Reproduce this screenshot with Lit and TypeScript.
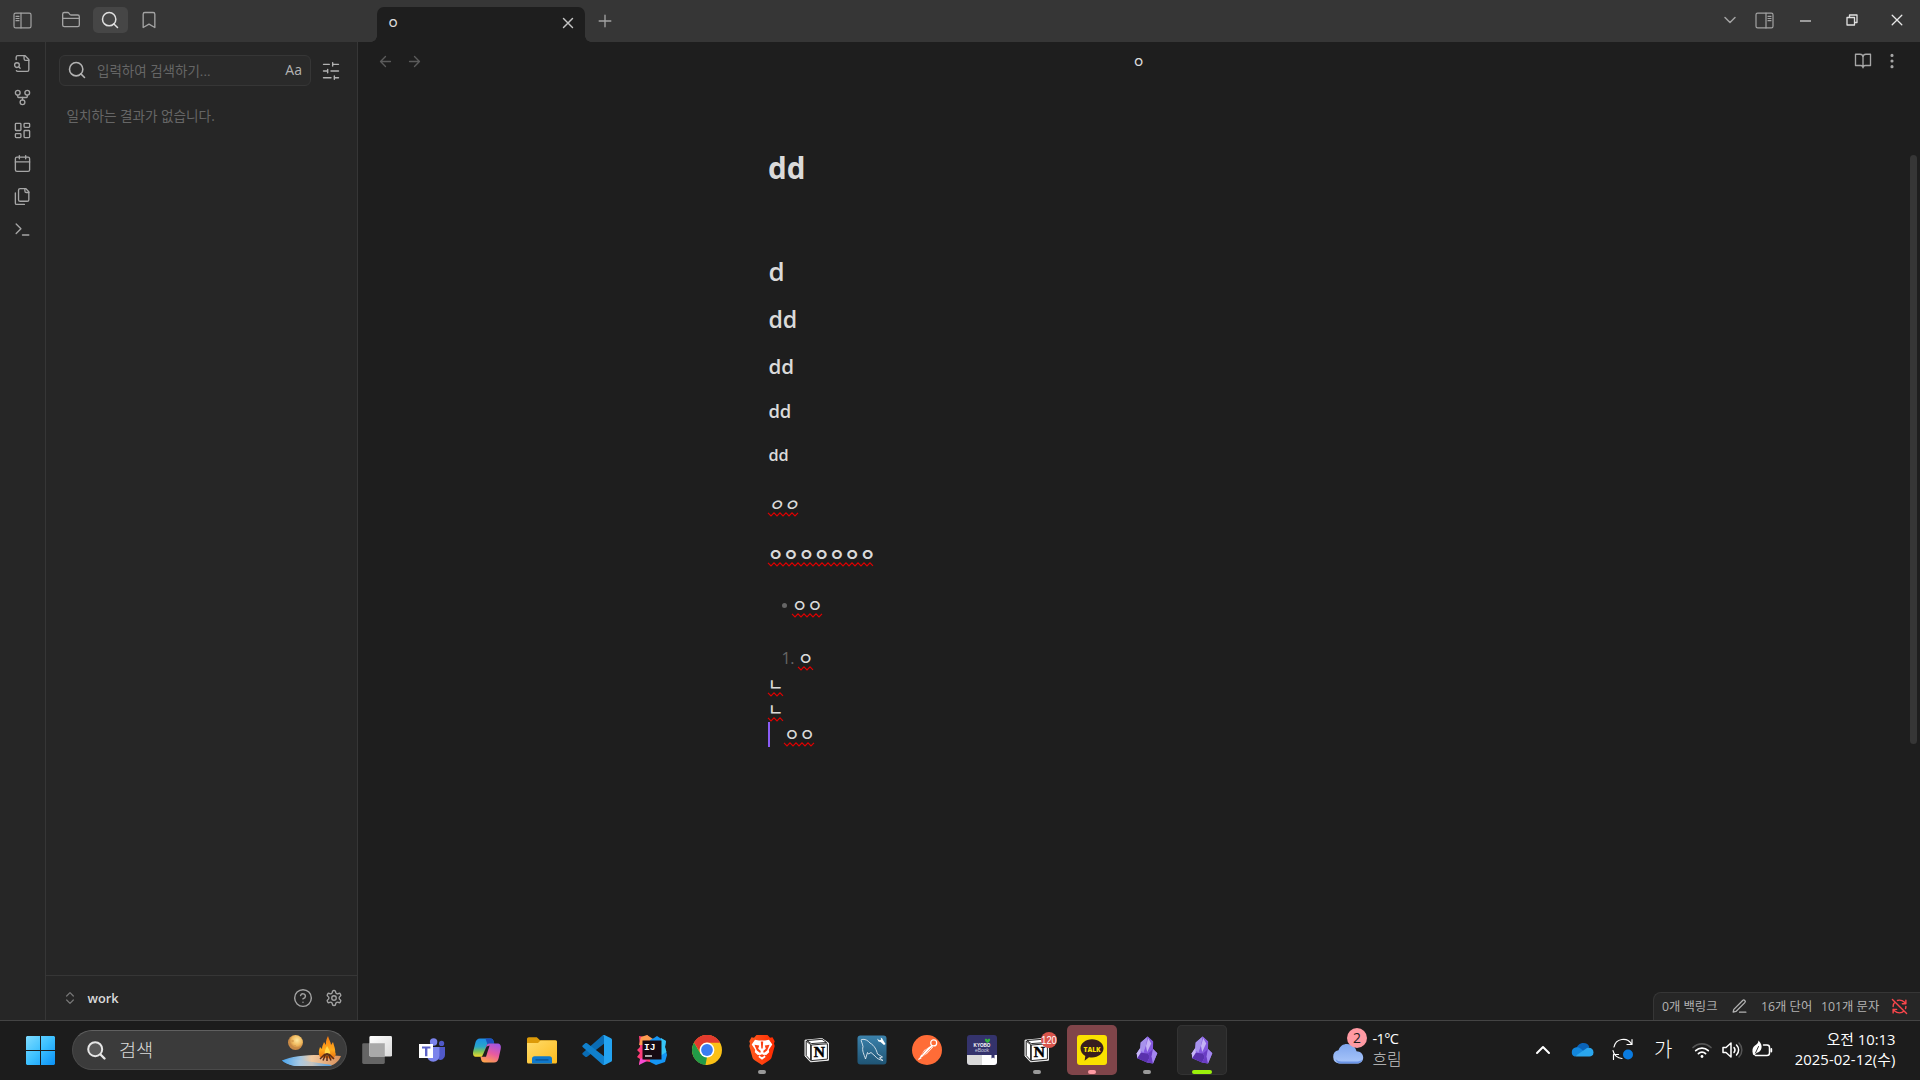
import { LitElement, html, svg, css, TemplateResult, SVGTemplateResult } from "lit";
import { customElement } from "lit/decorators.js";

/* ---------- line icons (24x24 grid) ---------- */
const paths: Record<string, SVGTemplateResult> = {
  folder: svg`<path d="M20 20a2 2 0 0 0 2-2V8a2 2 0 0 0-2-2h-7.9a2 2 0 0 1-1.69-.9L9.6 3.9A2 2 0 0 0 7.93 3H4a2 2 0 0 0-2 2v13a2 2 0 0 0 2 2Z"/><path d="M2 10h20"/>`,
  search: svg`<circle cx="11" cy="11" r="8"/><path d="m21 21-4.3-4.3"/>`,
  bookmark: svg`<path d="m19 21-7-4-7 4V5a2 2 0 0 1 2-2h10a2 2 0 0 1 2 2v16z"/>`,
  fileSearch: svg`<path d="M14 2v4a2 2 0 0 0 2 2h4"/><path d="M4.268 21a2 2 0 0 0 1.727 1H18a2 2 0 0 0 2-2V7l-5-5H6a2 2 0 0 0-2 2v3"/><path d="m9 18-1.5-1.5"/><circle cx="5" cy="14" r="3"/>`,
  fork: svg`<circle cx="12" cy="18" r="3"/><circle cx="6" cy="6" r="3"/><circle cx="18" cy="6" r="3"/><path d="M18 9v2c0 .6-.4 1-1 1H7c-.6 0-1-.4-1-1V9"/><path d="M12 12v3"/>`,
  dashboard: svg`<rect width="7" height="9" x="3" y="3" rx="1"/><rect width="7" height="5" x="14" y="3" rx="1"/><rect width="7" height="9" x="14" y="12" rx="1"/><rect width="7" height="5" x="3" y="16" rx="1"/>`,
  calendar: svg`<path d="M8 2v4M16 2v4"/><rect width="18" height="18" x="3" y="4" rx="2"/><path d="M3 10h18"/>`,
  files: svg`<path d="M20 7h-3a2 2 0 0 1-2-2V2"/><path d="M9 18a2 2 0 0 1-2-2V4a2 2 0 0 1 2-2h7l4 4v10a2 2 0 0 1-2 2Z"/><path d="M3 7.6v12.8A1.6 1.6 0 0 0 4.6 22h9.8"/>`,
  terminal: svg`<path d="m4 17 6-6-6-6M12 19h8"/>`,
  sliders: svg`<path d="M21 4h-7M10 4H3M21 12h-9M8 12H3M21 20h-5M12 20H3M14 2v4M8 10v4M16 18v4"/>`,
  updown: svg`<path d="m7 15 5 5 5-5M7 9l5-5 5 5"/>`,
  help: svg`<circle cx="12" cy="12" r="10"/><path d="M9.09 9a3 3 0 0 1 5.83 1c0 2-3 3-3 3M12 17h.01"/>`,
  gear: svg`<path d="M12.22 2h-.44a2 2 0 0 0-2 2v.18a2 2 0 0 1-1 1.73l-.43.25a2 2 0 0 1-2 0l-.15-.08a2 2 0 0 0-2.73.73l-.22.38a2 2 0 0 0 .73 2.73l.15.1a2 2 0 0 1 1 1.72v.51a2 2 0 0 1-1 1.74l-.15.09a2 2 0 0 0-.73 2.73l.22.38a2 2 0 0 0 2.73.73l.15-.08a2 2 0 0 1 2 0l.43.25a2 2 0 0 1 1 1.73V20a2 2 0 0 0 2 2h.44a2 2 0 0 0 2-2v-.18a2 2 0 0 1 1-1.73l.43-.25a2 2 0 0 1 2 0l.15.08a2 2 0 0 0 2.73-.73l.22-.39a2 2 0 0 0-.73-2.73l-.15-.08a2 2 0 0 1-1-1.74v-.5a2 2 0 0 1 1-1.74l.15-.09a2 2 0 0 0 .73-2.73l-.22-.38a2 2 0 0 0-2.73-.73l-.15.08a2 2 0 0 1-2 0l-.43-.25a2 2 0 0 1-1-1.73V4a2 2 0 0 0-2-2z"/><circle cx="12" cy="12" r="3"/>`,
  close: svg`<path d="M18 6 6 18M6 6l12 12"/>`,
  plus: svg`<path d="M5 12h14M12 5v14"/>`,
  left: svg`<path d="m12 19-7-7 7-7M19 12H5"/>`,
  right: svg`<path d="M5 12h14M12 5l7 7-7 7"/>`,
  down: svg`<path d="m6 9 6 6 6-6"/>`,
  book: svg`<path d="M2 3h6a4 4 0 0 1 4 4v14a3 3 0 0 0-3-3H2zM22 3h-6a4 4 0 0 0-4 4v14a3 3 0 0 1 3-3h7z"/>`,
  kebab: svg`<circle cx="12" cy="12" r="1"/><circle cx="12" cy="4.5" r="1"/><circle cx="12" cy="19.5" r="1"/>`,
  pencil: svg`<path d="M12 20h9M16.5 3.5a2.12 2.12 0 0 1 3 3L7 19l-4 1 1-4Z"/>`,
  syncOff: svg`<path d="M21 8 18.74 5.74A9.75 9.75 0 0 0 12 3C11 3 10.03 3.16 9.13 3.47M8 16H3v5M3 12C3 9.51 4 7.26 5.64 5.64M3 16l2.26 2.26A9.75 9.75 0 0 0 12 21c2.49 0 4.74-1 6.36-2.64M21 12c0 1-.16 1.97-.47 2.87M21 3v5h-5M22 22 2 2"/>`,
};

const icon = (name: string, size = 18, weight = 1.9) => html`<svg class="line" width=${size} height=${size}
  viewBox="0 0 24 24" stroke-width=${weight}>${paths[name]}</svg>`;

const panelIcon = (flip: boolean) => html`<svg class="line ${flip ? "flip" : ""}" width="19" height="17" viewBox="0 0 19 17" stroke-width="1.2">
  <rect x="1" y="1.1" width="17" height="14.8" rx="1.6"/><path d="M8 1v15M3 4.3h3M3 6.5h3M3 8.7h3"/></svg>`;

/* ---------- taskbar artwork (32x32 grid) ---------- */
const notion = svg`<path d="M4 6.2 21 4.6 27.5 9v17.2l-18 1.6L4 22z" fill="#fff" stroke="#eee" stroke-width="1" stroke-linejoin="round"/>
  <path d="M5.2 7 9.6 10.6v15.8L5.2 21.6zM6 6.6l15-1.3 4.6 3.2-15.4 1.1z" fill="#fff" stroke="#111" stroke-width=".9"/>
  <path d="M10.3 11 26.4 9.8v15.3l-16.1 1.5z" fill="#fff" stroke="#111" stroke-width=".9"/>
  <text x="18.4" y="23.2" text-anchor="middle" font-family="Liberation Serif, serif" font-weight="700" font-size="15.5" fill="#000" stroke="#000" stroke-width=".5">N</text>`;

const obsidian = svg`<path d="M16.7 2.6 22.1 7.4 22 15 26.3 19.3 22 29.4 16 28.6 6.3 24.2 5.7 19.3 9.2 14 9.7 8.4z" fill="#8f6be8"/>
  <path d="M16.7 2.6 9.7 8.4 9 16.6 13 18.5 15.5 11z" fill="#a792ec"/>
  <path d="M16.7 2.6 15 11.5 12.5 18.5 17 19.5 22 15 22.1 7.4z" fill="#8458df"/>
  <path d="m17.2 4 3 5.5-4 8.500-1.200-6z" fill="#c4b2f5"/>
  <path d="M9.2 14 5.7 19.3l.6 4.9 3.7-4.9z" fill="#c6b6f6"/>
  <path d="m9.8 18.7 7.2.8 1.8 3.6-2.8 5.5-9.7-4.4z" fill="#5a31ad"/>
  <path d="m17 19.5 5-4.5-.6 6.5.6 7.9-6-.8 2.8-5.500z" fill="#6a3cc4"/>
  <path d="m22 15 4.300 4.300-4.300 10.100-1.500-7z" fill="#a486f0"/>`;

const art: Record<string, SVGTemplateResult> = {
  taskview: svg`<defs><linearGradient id="tv" x1="0" y1="0" x2="1" y2="1"><stop offset="0" stop-color="#fff"/><stop offset="1" stop-color="#d9d9d9"/></linearGradient></defs>
    <rect x="1.2" y="9.3" width="22.6" height="20.6" rx="1.4" fill="#656565"/><rect x="8.4" y="2" width="22.6" height="20.6" rx="1.4" fill="url(#tv)"/>
    <path d="M8.4 9.3h15.4v13.3H9.8a1.4 1.4 0 0 1-1.4-1.4z" fill="#a9a9a9"/>`,
  teams: svg`<circle cx="17.6" cy="8" r="3.7" fill="#7b83eb"/><circle cx="25.6" cy="9.4" r="2.6" fill="#5059c9"/>
    <path d="M20 13h9v8a4.6 4.6 0 0 1-7 4.2z" fill="#5059c9"/><path d="M11 13h12.4v8.6a6.2 6.2 0 0 1-12.4 0z" fill="#7b83eb"/>
    <rect x="3" y="10" width="14" height="14" fill="#fff"/><path d="M6 12.4h8.4v2.2h-3v7.6H9v-7.6H6z" fill="#5b62c8"/>`,
  copilot: svg`<defs><linearGradient id="ca" x1="0" y1="0" x2="0" y2="1"><stop offset="0" stop-color="#1b8de8"/><stop offset=".45" stop-color="#2aa6c8"/><stop offset=".7" stop-color="#7ac25a"/><stop offset="1" stop-color="#f5d92c"/></linearGradient>
    <linearGradient id="cb" x1=".7" y1="0" x2=".3" y2="1"><stop offset="0" stop-color="#a355e0"/><stop offset=".5" stop-color="#e85aa0"/><stop offset="1" stop-color="#ffa34d"/></linearGradient></defs>
    <path d="M9 4.5h10.5c2 0 2.6 1 3.2 3l.6 2h-4.4c-2 0-3 1-3.6 3l-2 7.5c-.6 2-1.6 2.8-3.6 2.8H5.5C2.3 22.8 1.5 20.5 2.3 17l2-8C5 6 6.5 4.5 9 4.5z" fill="url(#ca)"/>
    <path d="M14.5 4.5h5c2 0 2.6 1 3.2 3l.6 2h-4.4c-1 0-1.8.4-2.4 1z" fill="#1d4fbf"/>
    <path d="M23 28.5H13.5c-2 0-2.8-1-3.3-2.8L9.5 22.7c2 0 3-.8 3.6-2.8l2-7.4c.6-2 1.6-3 3.6-3H26c3.2 0 4.5 2 3.7 5.5l-2 9c-.7 3-2.2 4.5-4.7 4.5z" fill="url(#cb)"/>
    <path d="m15.6 12.5 3-1-3.6 11.3h-4z" fill="#1e1e1e"/>`,
  explorer: svg`<defs><linearGradient id="fx" x1="0" y1="0" x2="1" y2="1"><stop offset="0" stop-color="#ffdc6b"/><stop offset="1" stop-color="#fdbb1d"/></linearGradient></defs>
    <path d="M1 5.2C1 4 1.8 3.3 2.8 3.3h8l3.2 3h15c1.2 0 2 .8 2 2V12H1z" fill="#dc9a08"/>
    <path d="M1 9h11l2.5-2.5H29.5c1 0 1.5.6 1.5 1.5v20c0 .9-.5 1.5-1.5 1.5h-27C1.6 29.5 1 28.9 1 28z" fill="url(#fx)"/>
    <path d="M6 29.5v-4.7c0-1.6 1-2.6 2.6-2.6h14.8c1.6 0 2.6 1 2.6 2.6v4.7z" fill="#0f79cc"/><path d="M9.5 25.9h13" stroke="#0b4f8c" stroke-width="1.2"/>`,
  vscode: svg`<path d="m1.6 20.4 2.6 2.3c.6.5 1.3.5 1.9 0L23 9.8V1c-.7 0-1.3.3-1.8.8L1.6 19c-.5.5-.5 1 0 1.4z" fill="#0a6cb4"/>
    <path d="m1.6 11.6 2.6-2.3c.6-.5 1.3-.5 1.9 0L23 22.2V31c-.7 0-1.3-.3-1.8-.8L1.6 13c-.5-.5-.5-1 0-1.4z" fill="#1080cc"/>
    <path d="M21.2 30.2c1 .8 1.8 1 2.8.5l6-2.9c.7-.3 1-.9 1-1.6V5.8c0-.7-.3-1.3-1-1.6l-6-2.9c-1-.5-1.8-.3-2.8.5 1-.6 1.8 0 1.8 1v26.4c0 1-.8 1.6-1.8 1z" fill="#23a3f1"/>`,
  intellij: svg`<path d="m3 2 6 1 2.5-2L16 8l-2 20-6-1-5 4 1-6-3-2 3-4-3-3 3-3z" fill="#ff3d78"/>
    <path d="m5 3 6-2 6 4-6 6H3z" fill="#ff9c50"/><path d="m18 4 3-2 3 2 6 3-1 6 2 8-2 7-9 3-6-3V6z" fill="#1596f5"/>
    <path d="m25 4 5 3-1 6 1.5 5-6.5 4z" fill="#37c6f7"/><path d="m5 24 6 3-8 4 1-5z" fill="#f64bd1"/>
    <rect x="6.5" y="6.5" width="19" height="19" fill="#160a12"/>
    <text x="8" y="16" font-family="Liberation Mono, monospace" font-weight="700" font-size="9.5" fill="#fff">IJ</text><path d="M9 22h7" stroke="#fff" stroke-width="1.3"/>`,
  chrome: svg`<circle cx="16" cy="16" r="15" fill="#fbc116"/><path d="M3 8.5A15 15 0 0 1 29 8.5z" fill="#e33b2e"/>
    <path d="M3 8.5 9.5 19.8 16 23l-1.5 8A15 15 0 0 1 3 8.5z" fill="#229a48"/><path d="M3 8.5A15 15 0 0 1 29 8.5H16A7.5 7.5 0 0 0 8.8 18z" fill="#e33b2e"/>
    <path d="M22.5 19.8 16 31a15 15 0 0 1-1.5-.1L19 22z" fill="#fbc116"/><circle cx="16" cy="16" r="7.4" fill="#fff"/><circle cx="16" cy="16" r="5.9" fill="#3a7df0"/>`,
  brave: svg`<defs><linearGradient id="br"><stop offset="0" stop-color="#ff5a1f"/><stop offset="1" stop-color="#ff2a00"/></linearGradient></defs>
    <path d="M10.5 1h11l2.5 2.7 2.5-.5 2.2 4-.7 2.3.7 2.5-3 11c-.5 1.8-1.3 2.6-2.7 3.6L16 31l-7-4.4c-1.4-1-2.2-1.8-2.7-3.6l-3-11 .7-2.5-.7-2.3 2.2-4 2.5.5z" fill="url(#br)"/>
    <path d="m9 5.800 4 .8h6l4-.8 3.300 4.600-3.500 5.400.4 2.500-3 2.800-1.800-.3 1.200 2.300L16 25.800l-3.600-2.700 1.200-2.300-1.800.3-3-2.800.4-2.500-3.500-5.400z" fill="#fff"/>
    <path d="m8.500 10.700 4.700.8-1 3.300 2.600 2.200-.6 2-3.300-2.400-1.600-3.500zM23.500 10.700l-4.700.8 1 3.300-2.600 2.200.6 2 3.300-2.400 1.600-3.500zM14.800 7.500h2.400l-.5 7h-1.400zM13 21.500l3-1.200 3 1.200-3 1.800z" fill="#fb4115"/>`,
  notion,
  mysql: svg`<defs><linearGradient id="my" x1="0" y1="0" x2="0" y2="1"><stop offset="0" stop-color="#3b82ac"/><stop offset="1" stop-color="#1f5474"/></linearGradient></defs>
    <rect x="1.5" y="1.5" width="29" height="29" rx="3" fill="url(#my)"/>
    <path d="M9.5 25C8 20 5.8 17 7 12.5 6.5 9 4.5 7 5.5 5.5c3.5-.8 6.5 1 8.500 3.500 4.500 2.500 6.500 7 7.500 11l5 3-3 .8 3.500 2.700c-3-.8-6-1.500-8-4.500L15 18.500l-2.500 1.500-1-1.500z" fill="none" stroke="#dfe9f0" stroke-width=".9"/>
    <path d="m21 4.500 1.500 3 2 .4 3.500 3 1.500-1-2.500-4-.8-1.400-1.500-1 .4 2.300-1.800.4z" fill="#fff"/>`,
  postman: svg`<circle cx="16" cy="16" r="15" fill="#ff6c37"/><circle cx="22.7" cy="8.9" r="3" fill="none" stroke="#fff" stroke-width="1.2"/><path d="M20.3 11.5 22 13.3 16 19.7l-7 4.5-1 .9 1.3-2.8 4-6.3z" fill="#fff"/><path d="m20.5 13.5-8 8.5M17 13l-6.5 8" stroke="#ff6c37" stroke-width=".8"/><path d="m7.3 25.5 3-1.8" stroke="#fff" stroke-width="1.2"/>`,
  kyobo: svg`<rect x="1" y="1" width="30" height="30" rx="3" fill="#34336c"/><path d="M1 21h15v10H4a3 3 0 0 1-3-3z" fill="#d9d9d9"/><path d="M16 21h15v7a3 3 0 0 1-3 3H16z" fill="#fff"/><path d="M25.5 20h3v4.5l-1.5-1-1.5 1z" fill="#34336c"/>
    <path d="M21.5 9c-2.5-1.5-3-3-2.5-4 1-.7 2 0 2.5.8.5-.8 1.5-1.5 2.5-.8.5 1 0 2.5-2.5 4z" fill="#33b53f"/>
    <text x="16" y="12.5" text-anchor="middle" font-family="Liberation Sans, sans-serif" font-weight="700" font-size="4.6" fill="#fff">KYOBO</text>
    <text x="16" y="17.6" text-anchor="middle" font-family="Liberation Sans, sans-serif" font-size="5" fill="#c8c8dd">eBook</text>`,
  notionBadge: svg`${notion}<circle cx="28" cy="6" r="8" fill="#d9544b"/><text x="28" y="10" text-anchor="middle" font-family="Liberation Sans, sans-serif" font-size="11" textLength="15.5" lengthAdjust="spacingAndGlyphs" fill="#fff">120</text>`,
  kakao: svg`<rect x="1" y="1" width="30" height="30" rx="3" fill="#fae100"/><path d="M16 5.3c6.4 0 11.5 4 11.5 9s-5 9.2-11.5 9.2c-1 0-2-.1-3-.3L8.6 26.8l.7-4.9c-3-1.6-4.8-4.3-4.8-7.6 0-5 5.1-9 11.5-9z" fill="#371d1e"/>
    <text x="16" y="17.7" text-anchor="middle" font-family="Open Sans, sans-serif" font-weight="800" font-size="7.6" textLength="17" lengthAdjust="spacingAndGlyphs" fill="#fae100">TALK</text>`,
  obsidian,
};

interface App { art: string; mark?: string; tile?: string }
const apps: App[] = [
  { art: "taskview" }, { art: "teams" }, { art: "copilot" }, { art: "explorer" }, { art: "vscode" },
  { art: "intellij" }, { art: "chrome" }, { art: "brave", mark: "dot" }, { art: "notion" }, { art: "mysql" },
  { art: "postman" }, { art: "kyobo" }, { art: "notionBadge", mark: "dot" },
  { art: "kakao", mark: "pink", tile: "alert" }, { art: "obsidian", mark: "dot" },
  { art: "obsidian", mark: "green", tile: "active" },
];

/* Text flagged by the spell checker, with its wavy underline. */
const misspelt = (text: string, cls = "") => {
  const width = text.length * 15.33;
  let d = "M0 .8";
  for (let x = 3; x <= width + 0.5; x += 3) d += ` L${x} ${(x / 3) % 2 ? 3.8 : 0.8}`;
  return html`<span class="bad ${cls}">${text}<svg class="wave" width=${width} height="5"><path d=${d}/></svg></span>`;
};

@customElement("app-root")
export class AppRoot extends LitElement {
  static styles = css`
    :host { display: block; width: 1920px; height: 1080px; overflow: hidden; background: #1e1e1e; color: #dadada;
      font-family: "Open Sans", "Noto Sans CJK KR", sans-serif; font-size: 13px; }
    * { box-sizing: border-box; }
    svg { display: block; flex: none; overflow: visible; }
    .line { fill: none; stroke: currentColor; stroke-linecap: round; stroke-linejoin: round; }
    .flip { transform: scaleX(-1); }
    .page { display: flex; flex-direction: column; height: 1080px; }
    .top { display: flex; height: 42px; background: #363636; color: #a3a3a3; flex: none; }
    .toggle { width: 53.5px; padding: 12px 0 0 13px; }
    .side-tabs { display: flex; gap: 4px; padding: 7px 0 0; width: 323.5px; }
    .side-tab { width: 35px; height: 26px; border-radius: 5px; display: grid; place-items: center; }
    .side-tab.on { background: #464646; color: #e0e0e0; }
    .tab { position: relative; width: 208px; height: 35px; margin-top: 7px; padding: 0 8px 0 10px; border-radius: 7px 7px 0 0;
      background: #1e1e1e; display: flex; justify-content: space-between; align-items: center; color: #dadada; }
    .tab::before, .tab::after { content: ""; position: absolute; bottom: 0; width: 6px; height: 6px; }
    .tab::before { left: -6px; background: radial-gradient(circle at 0 0, #363636 5.5px, #1e1e1e 6px); }
    .tab::after { right: -6px; background: radial-gradient(circle at 100% 0, #363636 5.5px, #1e1e1e 6px); }
    .tab-name { font-size: 13.3px; font-weight: 500; margin-top: -5px; }
    .tab .line { color: #c4c4c4; margin-top: -3px; }
    .add { padding: 11px 0 0 10px; flex: 1; }
    .controls { display: flex; align-items: center; height: 40px; }
    .c-down { margin-right: 14.5px; } .c-panel { margin-right: 26px; } .c-min { margin-right: 35px; color: #c8c8c8; }
    .c-max { margin-right: 33.5px; color: #e0e0e0; } .c-close { margin-right: 16.8px; color: #e8e8e8; }
    .body { display: flex; height: 978px; flex: none; }
    .ribbon { width: 46px; background: #262626; border-right: 1px solid #363636; padding-top: 5.4px; color: #a6a6a6; }
    .ribbon-item { height: 33.2px; display: flex; align-items: center; padding-left: 12.5px; }
    .sidebar { width: 312px; background: #262626; border-right: 1px solid #363636; display: flex; flex-direction: column; }
    .search-row { display: flex; align-items: center; padding: 13px 0 0 13px; color: #b3b3b3; gap: 9.5px; }
    .search-box { width: 252px; height: 31px; border: 1px solid #363636; border-radius: 6px; background: #2a2a2a; display: flex; align-items: center; padding: 0 8px 1px 6.5px; }
    .hint { flex: 1; padding-left: 10.5px; color: #666; font-size: 13.5px; }
    .aa { font-size: 14px; font-weight: 400; line-height: 20px; }
    .none { color: #666; font-size: 13.6px; line-height: 20px; padding: 20px 0 0 20.5px; flex: 1; }
    .vault { height: 45px; border-top: 1px solid #363636; display: flex; align-items: center; padding-left: 16px; color: #a3a3a3; }
    .vault .sort { color: #777; }
    .name { font-weight: 600; font-size: 12.8px; color: #dadada; padding: 0 0 1px 9.5px; flex: 1; }
    .cog { margin: 0 14px 0 12px; }
    .main { flex: 1; display: flex; flex-direction: column; position: relative; }
    .head { height: 38px; display: flex; align-items: center; color: #a6a6a6; padding-left: 19px; }
    .nav { display: flex; gap: 12px; color: #5b5b5b; width: 80px; }
    .title { flex: 1; text-align: center; padding-right: 20px; font-size: 13.3px; font-weight: 500; color: #dadada; }
    .tools { display: flex; width: 80px; gap: 11px; padding-left: 14px; }
    .doc { padding-left: 410px; flex: 1; }
    .h { line-height: 24px; height: 24px; font-weight: 600; }
    .h1 { font-size: 29.6px; font-weight: 700; margin-top: 76.4px; }
    .h2 { font-size: 26px; margin-top: 78.5px; } .h3 { font-size: 23.2px; margin-top: 24px; }
    .h4 { font-size: 20.6px; margin-top: 23px; } .h5 { font-size: 18.4px; margin-top: 21px; } .h6 { font-size: 16.3px; margin-top: 20px; }
    .h:not(.h1) { padding-left: .4px; }
    .row { height: 25px; line-height: 25px; font-size: 16.66px; display: flex; align-items: center; }
    .it { margin-top: 25px; } .bo { margin-top: 25px; } .ul { margin-top: 26px; padding-left: 14px; } .ol { margin-top: 28.5px; padding-left: 13.5px; }
    .tail { padding-top: 1px; }
    .dot5 { width: 5px; height: 5px; border-radius: 50%; background: #666; margin-right: 5px; }
    .num { color: #666; width: 16.5px; font-size: 16px; letter-spacing: -.3px; }
    .bad { position: relative; white-space: pre; font-weight: 500; }
    .bad.italic { font-style: italic; } .bad.bold { font-weight: 700; }
    .wave { position: absolute; left: 0; top: 20px; fill: none; stroke: #e00000; stroke-width: 1.2; }
    .it .wave { top: 20.5px; }
    .caret { width: 2px; height: 25px; background: #8a5cf5; margin-right: 14.3px; }
    .scroll { position: absolute; right: 3px; top: 113px; width: 7px; height: 589px; border-radius: 4px; background: #363636; }
    .status { position: absolute; right: 0; bottom: 0; width: 267px; height: 28px; border: 1px solid #363636; border-width: 1px 0 0 1px;
      border-radius: 8px 0 0 0; background: #262626; color: #b3b3b3; display: flex; align-items: center; padding: 0 0 1px 8px; font-size: 12.3px; white-space: nowrap; }
    .s1 { width: 69px; } .s2 { width: 30px; } .s3 { width: 60px; } .s4 { width: 70px; } .s5 { color: #fb464c; }
    .taskbar { height: 60px; border-top: 1px solid #444; background: #1c1c1c; display: flex; align-items: center; flex: none; padding: 0 0 1px 26px; color: #fff; }
    .pill { width: 275px; height: 40px; margin: 0 2.5px 0 17px; border-radius: 20px; background: #3b3b3b; border: 1px solid #4a4a4a; border-top-color: #606060; display: flex; align-items: center; padding-left: 14px; }
    .pill-text { font-size: 18.6px; flex: 1; padding: 0 0 3px 13px; color: #dcdcdc; font-weight: 300; }
    .scene { margin-right: 5px; }
    .app { width: 50px; height: 50px; margin: 0 2.5px; display: grid; place-items: center; position: relative; border-radius: 5px; }
    .alert { background: #80454a; } .active { background: #292929; box-shadow: inset 0 0 0 1px #333; }
    .mark { position: absolute; bottom: 1px; left: 50%; width: 8px; height: 4px; margin-left: -4px; border-radius: 2px; background: #999; }
    .mark.pink { background: #ff9aa3; } .mark.green { background: #9bf00b; width: 20px; margin-left: -10px; }
    .weather { margin-left: 102px; display: flex; gap: 5px; width: 204px; }
    .wtext { font-size: 14.5px; line-height: 20px; font-weight: 400; margin-top: -1px; }
    .temp { letter-spacing: -.6px; } .sky { color: #c8c8c8; font-weight: 300; font-size: 15.9px; }
    .tray { display: flex; align-items: center; }
    .ime { font-size: 20px; font-weight: 300; width: 38.5px; padding: 0 0 4px .5px; }
    .clock { flex: 1; padding-right: 24.5px; text-align: right; font-size: 14.8px; line-height: 20.5px; white-space: nowrap; margin-top: -2px; }
    .date { letter-spacing: .1px; }
  `;

  private top(): TemplateResult {
    return html`<div class="top">
      <div class="toggle">${panelIcon(false)}</div>
      <div class="side-tabs">
        <div class="side-tab">${icon("folder", 20, 1.6)}</div>
        <div class="side-tab on">${icon("search", 20, 1.8)}</div>
        <div class="side-tab">${icon("bookmark", 20, 1.6)}</div>
      </div>
      <div class="tab"><span class="tab-name">ㅇ</span>${icon("close", 18, 1.9)}</div>
      <div class="add">${icon("plus", 20, 1.6)}</div>
      <div class="controls">
        <div class="c-down">${icon("down", 20, 1.8)}</div>
        <div class="c-panel">${panelIcon(true)}</div>
        <div class="c-min"><svg width="11" height="11"><path d="M0 6h11" stroke="currentColor" stroke-width="1.4"/></svg></div>
        <div class="c-max"><svg class="line" width="12" height="12" stroke-width="1.3"><rect x="1" y="3.5" width="7.5" height="7.5"/><path d="M3.5 3V1H11v7.5H9"/></svg></div>
        <div class="c-close"><svg class="line" width="12" height="12" stroke-width="1.3"><path d="m1.2 1.2 9.6 9.6m0-9.6-9.6 9.6"/></svg></div>
      </div>
    </div>`;
  }

  private sidebar(): TemplateResult {
    return html`<div class="ribbon">
        ${["fileSearch", "fork", "dashboard", "calendar", "files", "terminal"].map((n) => html`<div class="ribbon-item">${icon(n, 19, 1.7)}</div>`)}
      </div>
      <div class="sidebar">
        <div class="search-row">
          <div class="search-box">${icon("search", 20, 1.9)}<span class="hint">입력하여 검색하기...</span><span class="aa">Aa</span></div>
          ${icon("sliders", 20, 1.7)}
        </div>
        <div class="none">일치하는 결과가 없습니다.</div>
        <div class="vault"><span class="sort">${icon("updown", 16, 1.9)}</span><span class="name">work</span>${icon("help", 20, 1.7)}<span class="cog">${icon("gear", 18, 1.8)}</span></div>
      </div>`;
  }

  private main(): TemplateResult {
    return html`<div class="main">
      <div class="head">
        <div class="nav">${icon("left", 17, 1.9)}${icon("right", 17, 1.9)}</div>
        <div class="title">ㅇ</div>
        <div class="tools">${icon("book", 18, 1.8)}${icon("kebab", 18, 2.2)}</div>
      </div>
      <div class="doc">
        <div class="h h1">dd</div><div class="h h2">d</div><div class="h h3">dd</div>
        <div class="h h4">dd</div><div class="h h5">dd</div><div class="h h6">dd</div>
        <div class="row it">${misspelt("ㅇㅇ", "italic")}</div>
        <div class="row bo">${misspelt("ㅇㅇㅇㅇㅇㅇㅇ", "bold")}</div>
        <div class="row ul"><span class="dot5"></span>${misspelt("ㅇㅇ")}</div>
        <div class="row ol"><span class="num">1.</span>${misspelt("ㅇ")}</div>
        <div class="tail">
          <div class="row">${misspelt("ㄴ")}</div>
          <div class="row">${misspelt("ㄴ")}</div>
          <div class="row"><span class="caret"></span>${misspelt("ㅇㅇ")}</div>
        </div>
      </div>
      <div class="scroll"></div>
      <div class="status"><span class="s1">0개 백링크</span><span class="s2">${icon("pencil", 17, 1.8)}</span><span class="s3">16개 단어</span><span class="s4">101개 문자</span><span class="s5">${icon("syncOff", 17, 2)}</span></div>
    </div>`;
  }

  private taskbar(): TemplateResult {
    return html`<div class="taskbar">
      <svg width="29" height="29"><defs><linearGradient id="w" x1="0" y1="0" x2="29" y2="29" gradientUnits="userSpaceOnUse"><stop offset="0" stop-color="#7fdcff"/><stop offset=".5" stop-color="#3cc0ff"/><stop offset="1" stop-color="#0a90f5"/></linearGradient></defs>
        <path d="M1 0h13v14H0V1zM15 0h13l1 1v13H15zM0 15h14v14H1l-1-1zM15 15h14v13l-1 1H15z" fill="url(#w)"/></svg>
      <div class="pill">
        <svg width="19" height="19" viewBox="0 0 19 19"><circle cx="8.2" cy="8.2" r="7" fill="#5a5a5a" stroke="#e6e6e6" stroke-width="2"/><path d="m13.5 13.5 4 4" stroke="#e6e6e6" stroke-width="2.4" stroke-linecap="round"/></svg>
        <span class="pill-text">검색</span>
        <svg class="scene" width="59" height="31" viewBox="0 0 59 31">
          <defs><radialGradient id="mn" cx=".6" cy=".35"><stop offset="0" stop-color="#ffe9a0"/><stop offset=".7" stop-color="#efb75c"/><stop offset="1" stop-color="#c98a45"/></radialGradient>
          <linearGradient id="sd"><stop offset="0" stop-color="#3d9bea"/><stop offset=".3" stop-color="#9cc4e4"/><stop offset=".5" stop-color="#f0c9a0"/><stop offset="1" stop-color="#d98f58"/></linearGradient>
          <linearGradient id="wt"><stop offset="0" stop-color="#4aa5ee"/><stop offset=".35" stop-color="#a9c9e2"/><stop offset=".6" stop-color="#c9c4bd"/><stop offset="1" stop-color="#3d9bea"/></linearGradient>
          <linearGradient id="fl" x1="0" y1="0" x2="0" y2="1"><stop offset="0" stop-color="#f57a12"/><stop offset=".6" stop-color="#ffab1c"/><stop offset="1" stop-color="#e86a10"/></linearGradient></defs>
          <circle cx="13.5" cy="7.5" r="7.5" fill="url(#mn)"/><circle cx="10.5" cy="6" r="1.3" fill="#d9a050"/><circle cx="13" cy="11" r="1" fill="#d9a050"/>
          <path d="M0 25.5C12 20 36 19 59 21c-2 5-6 8.5-11 10H13C7 30 3 28 0 25.5z" fill="url(#sd)"/>
          <path d="M0 25.5c6-1.5 14-1.5 24 .5 9 1.5 16 2.5 26 4l-2 1H13C7 30 3 28 0 25.5z" fill="url(#wt)"/>
          <path d="M38 22c-2-4-1-7 0-10l2 2c0-3 1-4 2-7l2 3c-.5-4 1-7 2-9 1 4 3 6 3 9l2-3c1 4 3 8 2 12l1-2c0 3-1 5-3 7z" fill="url(#fl)"/>
          <path d="M43 21c-1-4 0-6 2-10 2 4 4 5 3 10z" fill="#ffd84a"/>
          <path d="m38 24 5-5M52 24l-5-5M41 25.5l3-7M49 25.5l-3-7M45 18v8" stroke="#5b2d18" stroke-width="1.5" fill="none"/></svg>
      </div>
      ${apps.map((a) => html`<div class="app ${a.tile ?? ""}"><svg width="32" height="32" viewBox="0 0 32 32">${art[a.art]}</svg>${a.mark ? html`<i class="mark ${a.mark}"></i>` : ""}</div>`)}
      <div class="weather">
        <svg width="36" height="40" viewBox="0 0 36 40"><defs><linearGradient id="cl" x1="0" y1="0" x2="0" y2="1"><stop offset="0" stop-color="#7fa6ee"/><stop offset="1" stop-color="#a9c6fa"/></linearGradient></defs>
          <path d="M7 33.500a6.700 6.700 0 0 1-.5-13.200C8 16 11 14 15 14c5 0 8.500 3 9.500 7.200 3.800.2 6.700 2.500 6.700 6.200 0 3.600-2.600 6.100-6.500 6.100z" fill="url(#cl)"/><path d="M3.500 29c1 3 2.500 4.500 5 4.500h16c3 0 5-1.500 6-4-2 1.500-4 2-6 2h-15c-2.500 0-4.500-.8-6-2.500z" fill="#6a94e6"/>
          <circle cx="25" cy="8" r="10" fill="#ff9aa3"/><text x="25" y="13" text-anchor="middle" font-family="Open Sans, sans-serif" font-size="14" fill="#1c1c1c">2</text></svg>
        <div class="wtext"><div class="temp">-1°C</div><div class="sky">흐림</div></div>
      </div>
      <div class="tray">
        <svg class="line" width="35" height="22" stroke-width="2"><path d="m1 14 6-6 6 6"/></svg>
        <svg width="42" height="22" viewBox="0 0 42 22"><path d="M5.500 11.500C5 6.500 9 4 12.500 4c3 0 5 1.500 5.800 4L14 13.500z" fill="#0a63b8"/><path d="M3.500 17.500A4.800 4.800 0 0 1 4.500 8.500c3-1 5 .5 9 4.500z" fill="#1286dc"/><path d="M4 17.300 16 9c4-.8 6.500 1.500 6.500 4.500 0 2.500-2 3.900-4 3.900H5z" fill="#2aa6ee"/></svg>
        <svg class="line" width="41" height="22" viewBox="2 1 41 22" stroke-width="1.2"><path d="M3 9a9.500 9.500 0 0 1 17.500-3M21 1.500v5h-5M2 12.500a9.500 9.500 0 0 0 9 8M2.500 21.500v-5h5"/><circle cx="17" cy="16.500" r="5" fill="#0a7be0" stroke="none"/></svg>
        <span class="ime">가</span>
        <svg class="line" width="30" height="18" viewBox="0 0 30 18" stroke-width="1.7"><path d="M1 6.500a13 13 0 0 1 18 0" stroke="#555"/><path d="M3.700 9.700a9 9 0 0 1 12.600 0M6.400 12.600a5 5 0 0 1 7.200 0"/><circle cx="10" cy="15.500" r="1.400" fill="#fff" stroke="none"/></svg>
        <svg class="line" width="30" height="18" viewBox="0 0 30 18" stroke-width="1.5"><path d="M1 6.500h3L9 2v14l-5-4.500H1zM12 6.500a4 4 0 0 1 0 5M14.500 4a7 7 0 0 1 0 10"/><path d="M17 2a10 10 0 0 1 0 14" stroke="#555"/></svg>
        <svg class="line" width="22" height="18" viewBox="0 0 22 18" stroke-width="1.5"><path d="M11.500 4h3.500a2.500 2.500 0 0 1 2.500 2.500v5.500a2.500 2.500 0 0 1-2.500 2.500H3.500"/><path d="M19.300 8v2.500" stroke-width="1.800"/><path d="M6.500-.5c2.500 2.500 3.500 5 3 7.500-.4 2.600-2.300 4.500-5 5L2.500 14.500 1 13.500C-.2 9.500.5 6 3 4.500 5 3.300 6.300 2 6.500-.5z" fill="#fff" stroke="none"/><path d="M6.500 5.500 3.500 12" stroke="#1c1c1c" stroke-width=".9"/></svg>
      </div>
      <div class="clock"><div>오전 10:13</div><div class="date">2025-02-12(수)</div></div>
    </div>`;
  }

  render() {
    return html`<div class="page">${this.top()}<div class="body">${this.sidebar()}${this.main()}</div>${this.taskbar()}</div>`;
  }
}
